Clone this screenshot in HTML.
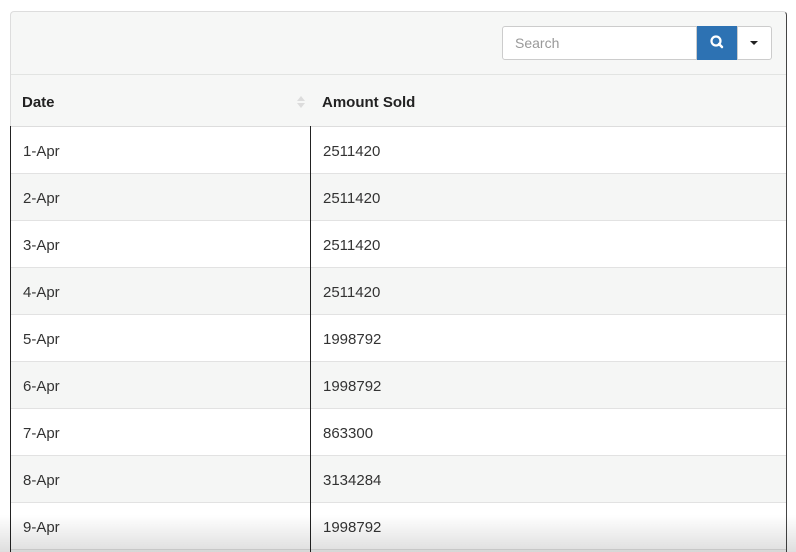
<!DOCTYPE html>
<html style="overflow:hidden;height:552px"><head><style>
body{margin:0;width:796px;height:552px;overflow:hidden;background:#fff;font-family:"Liberation Sans",sans-serif;position:relative}
.panel{position:absolute;left:10px;top:11px;width:775px;height:541px;overflow:hidden;border:1px solid #ddd;border-bottom:none;border-right:1px solid #444;border-radius:4px 4px 0 0;background:#f6f7f6}
.tb{height:62px;border-bottom:1px solid #e2e4e2;position:relative}
.inp{position:absolute;left:491px;top:14px;width:195px;height:34px;border:1px solid #ccc;border-radius:3px 0 0 3px;background:#fff;color:#999;font-size:14px;line-height:32px;padding-left:12px;box-sizing:border-box}
.btn{position:absolute;left:686px;top:14px;width:40px;height:34px;background:#2d72b3}
.dd{position:absolute;left:726px;top:14px;width:33px;height:32px;border:1px solid #ccc;border-radius:0 3px 3px 0;background:#fff}
.hd{height:51px;border-bottom:1px solid #ddd;position:relative;font-weight:bold;font-size:15px;color:#222}
.hd span{position:absolute;top:19px}
.row{height:46px;border-bottom:1px solid #e2e2e2;position:relative;font-size:15px;color:#333}
.row span{position:absolute;top:16px}
.odd{background:#fff}.even{background:#f5f6f5}
.vl{position:absolute;top:126px;height:426px;width:1px;background:#222}
.shade{position:absolute;left:0;top:515px;width:796px;height:37px;background:linear-gradient(rgba(0,0,0,0),rgba(0,0,0,0.13))}
</style></head><body>
<div class="panel">
<div class="tb">
<div class="inp">Search</div>
<div class="btn"><svg width="40" height="34"><circle cx="19" cy="15" r="4.5" fill="none" stroke="#fff" stroke-width="2.2"/><line x1="22" y1="18" x2="25" y2="21" stroke="#fff" stroke-width="2.5" stroke-linecap="round"/></svg></div>
<div class="dd"><svg width="33" height="32"><path d="M12 14h8l-4 4z" fill="#222"/></svg></div>
</div>
<div class="hd"><span style="left:11px">Date</span><svg style="position:absolute;left:285px;top:20px" width="10" height="14"><path d="M5 1l4 5H1z M5 13l4-5H1z" fill="#dcdcdc"/></svg><span style="left:311px">Amount Sold</span></div>
<div class="row odd"><span style="left:12px">1-Apr</span><span style="left:312px">2511420</span></div>
<div class="row even"><span style="left:12px">2-Apr</span><span style="left:312px">2511420</span></div>
<div class="row odd"><span style="left:12px">3-Apr</span><span style="left:312px">2511420</span></div>
<div class="row even"><span style="left:12px">4-Apr</span><span style="left:312px">2511420</span></div>
<div class="row odd"><span style="left:12px">5-Apr</span><span style="left:312px">1998792</span></div>
<div class="row even"><span style="left:12px">6-Apr</span><span style="left:312px">1998792</span></div>
<div class="row odd"><span style="left:12px">7-Apr</span><span style="left:312px">863300</span></div>
<div class="row even"><span style="left:12px">8-Apr</span><span style="left:312px">3134284</span></div>
<div class="row odd"><span style="left:12px">9-Apr</span><span style="left:312px">1998792</span></div>
</div>
<div class="vl" style="left:10px"></div>
<div class="vl" style="left:310px"></div>
<div class="shade"></div>
</body></html>
